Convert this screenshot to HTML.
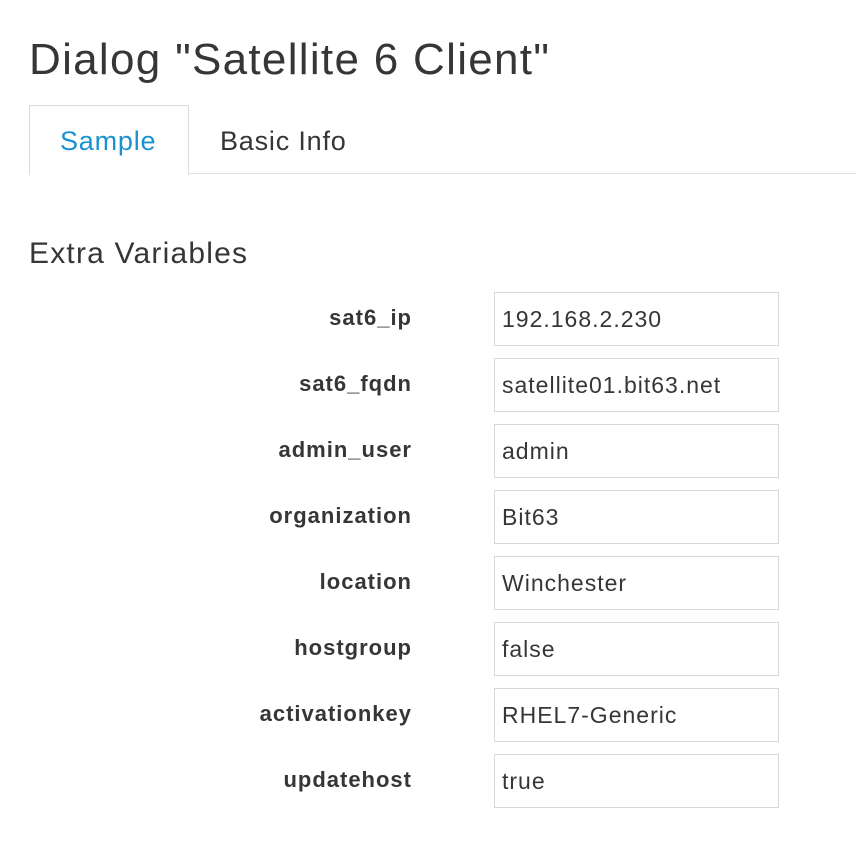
<!DOCTYPE html>
<html><head><meta charset="utf-8"><style>
body{margin:0;background:#fff;font-family:"Liberation Sans",sans-serif;color:#363636;width:856px;height:854px;overflow:hidden;position:relative}
.a{position:absolute;white-space:nowrap}
h1{position:absolute;left:29px;top:30px;margin:0;font-weight:normal;font-size:44px;line-height:60px;letter-spacing:1.3px}
.tabline{position:absolute;left:29px;right:0;top:173px;height:0;border-top:1px solid #e0e0e0}
.tab{position:absolute;left:29px;top:105px;width:160px;border:1px solid #dcdcdc;border-bottom:none;background:#fff;box-sizing:border-box;height:70px}
.t{font-size:27px;top:123px;line-height:36px;letter-spacing:0.8px}
.lbl{right:444px;font-weight:bold;font-size:22px;line-height:30px;text-align:right;letter-spacing:1px}
.inp{left:494px;width:285px;height:54px;border:1px solid #d9d9d9;box-sizing:border-box;font-size:23px;line-height:52px;padding-left:7px;letter-spacing:1px}
</style></head><body>
<h1>Dialog "Satellite 6 Client"</h1>
<div class="tabline"></div>
<div class="tab"></div>
<div class="a t" style="left:60px;color:#1a92d0">Sample</div>
<div class="a t" style="left:220px">Basic Info</div>
<div class="a" style="left:29px;top:234px;font-size:30px;line-height:40px;letter-spacing:1.2px">Extra Variables</div>

<div class="a lbl" style="top:303px">sat6_ip</div><div class="a inp" style="top:292px">192.168.2.230</div>
<div class="a lbl" style="top:369px">sat6_fqdn</div><div class="a inp" style="top:358px">satellite01.bit63.net</div>
<div class="a lbl" style="top:435px">admin_user</div><div class="a inp" style="top:424px">admin</div>
<div class="a lbl" style="top:501px">organization</div><div class="a inp" style="top:490px">Bit63</div>
<div class="a lbl" style="top:567px">location</div><div class="a inp" style="top:556px">Winchester</div>
<div class="a lbl" style="top:633px">hostgroup</div><div class="a inp" style="top:622px">false</div>
<div class="a lbl" style="top:699px">activationkey</div><div class="a inp" style="top:688px">RHEL7-Generic</div>
<div class="a lbl" style="top:765px">updatehost</div><div class="a inp" style="top:754px">true</div>
</body></html>
